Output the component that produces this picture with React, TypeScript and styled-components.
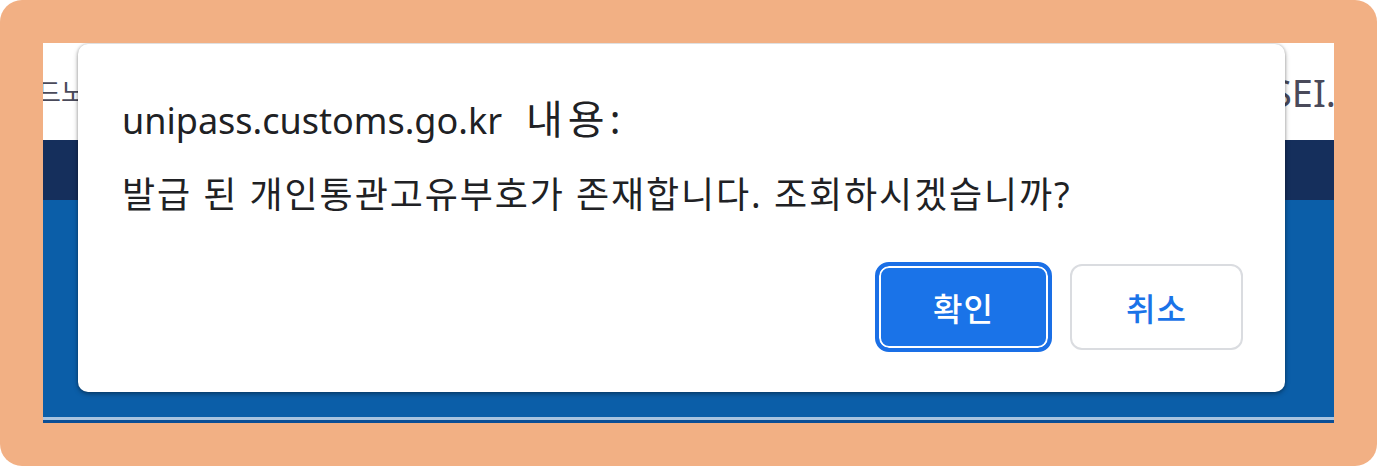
import React from "react";
import styled, { createGlobalStyle } from "styled-components";

const Global = createGlobalStyle`
  html, body { margin: 0; padding: 0; background: #ffffff; }
  body { font-family: "Noto Sans", "Noto Sans CJK KR", sans-serif; }
`;

const Frame = styled.div`
  width: 1377px;
  height: 466px;
  box-sizing: border-box;
  background: #f2b084;
  border-radius: 22px;
  padding: 43px 43px 43px 43px;
`;

const Screen = styled.div`
  position: relative;
  height: 100%;
  overflow: hidden;
  display: flex;
  flex-direction: column;
`;

const Header = styled.div`
  height: 97px;
  background: #ffffff;
  display: flex;
  align-items: center;
  justify-content: space-between;
  font-family: "Noto Sans", "Noto Sans CJK KR", sans-serif;
  color: #4a4a5a;
`;

const HeaderText = styled.span<{ $size: number; $shift: number }>`
  font-size: ${(p) => p.$size}px;
  line-height: 1;
  margin-left: ${(p) => p.$shift}px;
  margin-right: ${(p) => (p.$shift === 0 ? -2 : 0)}px;
`;

const NavBand = styled.div`
  height: 60px;
  background: #152f5c;
`;

const BlueArea = styled.div`
  flex: 1;
  background: #0b5ea8;
`;

const Line = styled.div<{ $color: string; $h: number }>`
  height: ${(p) => p.$h}px;
  background: ${(p) => p.$color};
`;

const Dialog = styled.div`
  position: absolute;
  left: 35px;
  top: 1px;
  width: 1207px;
  height: 348px;
  box-sizing: border-box;
  background: #ffffff;
  border-radius: 10px;
  box-shadow: 0 2px 5px rgba(0, 0, 0, 0.35), 0 0 3px rgba(0, 0, 0, 0.2);
  padding: 55px 42px 0 44px;
  display: flex;
  flex-direction: column;
  color: #202124;
`;

const Title = styled.div`
  font-family: "Noto Sans", "Noto Sans CJK KR", sans-serif;
  font-size: 36px;
  line-height: 40px;
  white-space: nowrap;
`;

const TitleKor = styled.span`
  margin-left: 24px;
  font-size: 40px;
  letter-spacing: 5px;
`;

const Message = styled.div`
  margin-top: 34px;
  font-family: "Noto Sans", "Noto Sans CJK KR", sans-serif;
  font-size: 36px;
  letter-spacing: 1.9px;
  line-height: 40px;
  white-space: nowrap;
`;

const Buttons = styled.div`
  margin-top: 47px;
  display: flex;
  justify-content: flex-end;
  align-items: center;
  gap: 18px;
`;

const Button = styled.button<{ $primary?: boolean }>`
  box-sizing: border-box;
  height: ${(p) => (p.$primary ? 90 : 86)}px;
  width: ${(p) => (p.$primary ? 177 : 173)}px;
  border-radius: ${(p) => (p.$primary ? 14 : 12)}px;
  border: ${(p) => (p.$primary ? "4px solid #1a6fe6" : "2px solid #dadce0")};
  background: ${(p) => (p.$primary ? "#1a73e8" : "#ffffff")};
  box-shadow: ${(p) => (p.$primary ? "inset 0 0 0 2px #ffffff" : "none")};
  color: ${(p) => (p.$primary ? "#ffffff" : "#1a73e8")};
  font-family: "Noto Sans CJK KR", "Noto Sans", sans-serif;
  font-size: 32px;
  font-weight: 500;
  letter-spacing: 1px;
  padding: 0;
  display: flex;
  align-items: center;
  justify-content: center;
`;

export default function App() {
  return (
    <>
      <Global />
      <Frame>
        <Screen>
          <Header>
            <HeaderText $size={26} $shift={-6}>드노</HeaderText>
            <HeaderText $size={38} $shift={0}>SEI.</HeaderText>
          </Header>
          <NavBand />
          <BlueArea />
          <Line $color="#a9c4e0" $h={3} />
          <Line $color="#0b4f96" $h={3} />
          <Dialog>
            <Title>
              unipass.customs.go.kr<TitleKor>내용:</TitleKor>
            </Title>
            <Message>발급 된 개인통관고유부호가 존재합니다. 조회하시겠습니까?</Message>
            <Buttons>
              <Button $primary>확인</Button>
              <Button>취소</Button>
            </Buttons>
          </Dialog>
        </Screen>
      </Frame>
    </>
  );
}
